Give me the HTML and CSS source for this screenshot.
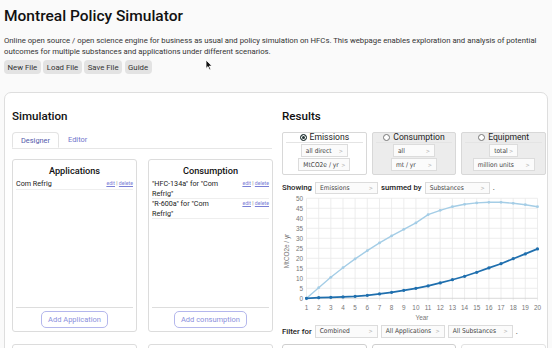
FILE: index.html
```html
<!DOCTYPE html>
<html lang="en">
  <head>
    <meta charset="UTF-8" />
    <meta name="viewport" content="width=device-width, initial-scale=1.0" />
    <title>Montreal Policy Simulator</title>
    <link rel="stylesheet" href="styles.css">
  </head>
  <body>
    <h1>Montreal Policy Simulator</h1>
    <p class="intro">Online open source / open science engine for business as usual and policy simulation on HFCs. This webpage enables exploration and analysis of potential<br>outcomes for multiple substances and applications under different scenarios.</p>

    <div class="file-buttons">
      <button>New File</button>
      <button>Load File</button>
      <button>Save File</button>
      <button>Guide</button>
    </div>

    <svg class="cursor" width="8" height="12" viewBox="0 0 8 12">
      <path d="M1 1 L1 9.5 L3 7.6 L4.6 11 L5.9 10.4 L4.3 7.1 L7 7.1 Z" fill="#111" stroke="#fff" stroke-width="0.8" />
    </svg>

    <main class="workspace">
      <section class="sim">
        <h2>Simulation</h2>
        <div class="tabs">
          <span class="tab active">Designer</span>
          <span class="tab">Editor</span>
        </div>

        <div class="cards">
          <div class="card">
            <h3>Applications</h3>
            <ul class="items">
              <li>
                <span class="item-name">Com Refrig</span>
                <span class="links"><a href="#">edit</a> | <a href="#">delete</a></span>
              </li>
            </ul>
            <div class="card-foot"><button class="add">Add Application</button></div>
          </div>

          <div class="card">
            <h3>Consumption</h3>
            <ul class="items">
              <li>
                <span class="item-name">"HFC-134a" for "Com Refrig"</span>
                <span class="links"><a href="#">edit</a> | <a href="#">delete</a></span>
              </li>
              <li>
                <span class="item-name">"R-600a" for "Com Refrig"</span>
                <span class="links"><a href="#">edit</a> | <a href="#">delete</a></span>
              </li>
            </ul>
            <div class="card-foot"><button class="add">Add consumption</button></div>
          </div>

          <div class="card"><h3>Policies</h3></div>
          <div class="card"><h3>Simulations</h3></div>
        </div>
      </section>

      <section class="results">
        <h2>Results</h2>

        <div class="modes">
          <div class="mode selected">
            <div class="mode-head"><span class="radio on"></span>Emissions</div>
            <span class="pick w47">all direct<span class="caret">&gt;</span></span>
            <span class="pick w52">MtCO2e / yr<span class="caret">&gt;</span></span>
          </div>
          <div class="mode">
            <div class="mode-head"><span class="radio"></span>Consumption</div>
            <span class="pick w42">all<span class="caret">&gt;</span></span>
            <span class="pick w46">mt / yr<span class="caret">&gt;</span></span>
          </div>
          <div class="mode">
            <div class="mode-head"><span class="radio"></span>Equipment</div>
            <span class="pick w29">total<span class="caret">&gt;</span></span>
            <span class="pick w62">million units<span class="caret">&gt;</span></span>
          </div>
        </div>

        <div class="line-row">
          <span class="lbl">Showing</span>
          <span class="pick w63">Emissions<span class="caret">&gt;</span></span>
          <span class="lbl">summed by</span>
          <span class="pick w65">Substances<span class="caret">&gt;</span></span>
          <span>.</span>
        </div>

        <svg class="chart" width="264" height="130" viewBox="0 0 264 130">
          <defs>
            <marker id="dotLight" markerWidth="4" markerHeight="4" refX="2" refY="2" markerUnits="userSpaceOnUse">
              <circle cx="2" cy="2" r="1.4" fill="#a4cde6" />
            </marker>
            <marker id="dotDark" markerWidth="4" markerHeight="4" refX="2" refY="2" markerUnits="userSpaceOnUse">
              <circle cx="2" cy="2" r="1.6" fill="#1f6fae" />
            </marker>
          </defs>
          <g class="grid">
            <path d="M24.5 4.3H255.5M24.5 14.3H255.5M24.5 24.3H255.5M24.5 34.3H255.5M24.5 44.3H255.5M24.5 54.3H255.5M24.5 64.3H255.5M24.5 74.3H255.5M24.5 84.3H255.5M24.5 94.3H255.5" />
            <path d="M24.5 4.3V106.5M36.7 4.3V106.5M48.8 4.3V106.5M61 4.3V106.5M73.1 4.3V106.5M85.3 4.3V106.5M97.5 4.3V106.5M109.6 4.3V106.5M121.8 4.3V106.5M133.9 4.3V106.5M146.1 4.3V106.5M158.2 4.3V106.5M170.4 4.3V106.5M182.6 4.3V106.5M194.7 4.3V106.5M206.9 4.3V106.5M219 4.3V106.5M231.2 4.3V106.5M243.3 4.3V106.5M255.5 4.3V106.5" />
          </g>
          <path class="axis" d="M24.5 104.3H255.5" />
          <g class="ylabels">
            <text x="21" y="106.6">0</text>
            <text x="21" y="96.6">5</text>
            <text x="21" y="86.6">10</text>
            <text x="21" y="76.6">15</text>
            <text x="21" y="66.6">20</text>
            <text x="21" y="56.6">25</text>
            <text x="21" y="46.6">30</text>
            <text x="21" y="36.6">35</text>
            <text x="21" y="26.6">40</text>
            <text x="21" y="16.6">45</text>
            <text x="21" y="6.6">50</text>
          </g>
          <g class="xlabels">
            <text x="24.5" y="115.5">1</text>
            <text x="36.7" y="115.5">2</text>
            <text x="48.8" y="115.5">3</text>
            <text x="61" y="115.5">4</text>
            <text x="73.1" y="115.5">5</text>
            <text x="85.3" y="115.5">6</text>
            <text x="97.5" y="115.5">7</text>
            <text x="109.6" y="115.5">8</text>
            <text x="121.8" y="115.5">9</text>
            <text x="133.9" y="115.5">10</text>
            <text x="146.1" y="115.5">11</text>
            <text x="158.2" y="115.5">12</text>
            <text x="170.4" y="115.5">13</text>
            <text x="182.6" y="115.5">14</text>
            <text x="194.7" y="115.5">15</text>
            <text x="206.9" y="115.5">16</text>
            <text x="219" y="115.5">17</text>
            <text x="231.2" y="115.5">18</text>
            <text x="243.3" y="115.5">19</text>
            <text x="255.5" y="115.5">20</text>
          </g>
          <text class="axis-title" x="140" y="125.5">Year</text>
          <text class="axis-title" transform="translate(7 57) rotate(-90)">MtCO2e / yr</text>

          <polyline class="series light" points="24.5,104.3 36.7,93.7 48.8,83.3 61,73.7 73.1,64.9 85.3,56.7 97.5,48.9 109.6,41.9 121.8,35.3 133.9,28.9 146.1,20.7 158.2,16.3 170.4,12.7 182.6,10.3 194.7,8.9 206.9,8.3 219,8.3 231.2,9.3 243.3,10.7 255.5,12.7" />
          <polyline class="series dark" points="24.5,104.3 36.7,103.7 48.8,103.3 61,102.9 73.1,102.3 85.3,101.3 97.5,99.9 109.6,98.3 121.8,96.3 133.9,94.3 146.1,91.9 158.2,88.9 170.4,85.7 182.6,82.3 194.7,78.3 206.9,73.9 219,69.7 231.2,64.7 243.3,59.9 255.5,54.9" />
        </svg>

        <div class="line-row filter">
          <span class="lbl">Filter for</span>
          <span class="pick w63">Combined<span class="caret">&gt;</span></span>
          <span class="pick w64">All Applications<span class="caret">&gt;</span></span>
          <span class="pick w65">All Substances<span class="caret">&gt;</span></span>
          <span>.</span>
        </div>

        <div class="views">
          <button class="view">&#9673; Simulations</button>
          <button class="view">&#9675; Applications</button>
          <button class="view light">&#9679; Substances</button>
        </div>
      </section>
    </main>
  </body>
</html>
```

FILE: styles.css
```css
body {
  margin: 0;
  padding: 0 4px;
  background-color: #fafafa;
  font-family: Roboto, "Noto Sans", sans-serif;
  color: #222;
}
h1 {
  font-size: 15.5px;
  font-weight: 500;
  line-height: 18px;
  margin: 7px 0 0;
  color: #111;
}
.intro {
  font-size: 7.75px;
  line-height: 11px;
  margin: 10px 0 0;
  color: #333;
  white-space: nowrap;
}
.file-buttons {
  display: flex;
  gap: 2.5px;
  margin-top: 3px;
}
.file-buttons button {
  height: 14px;
  padding: 0 3.5px;
  border: none;
  border-radius: 4px;
  background: #e3e3e3;
  color: #333;
  font-family: inherit;
  font-size: 7.8px;
}
.cursor {
  position: absolute;
  left: 205px;
  top: 59px;
}

.workspace {
  display: grid;
  grid-template-columns: 260px 1fr;
  gap: 10px;
  margin-top: 18px;
  padding: 16px 6px 0 7px;
  height: 300px;
  background: white;
  border: 1px solid #dedede;
  border-radius: 7px;
}
h2 {
  font-size: 11.6px;
  font-weight: 500;
  line-height: 14px;
  margin: 0;
  color: #111;
}

/* simulation side */
.tabs {
  display: flex;
  margin-top: 9px;
  height: 16px;
  border-bottom: 1px solid #e6e6e6;
}
.tab {
  padding: 0 9px;
  font-size: 7.4px;
  line-height: 16px;
  color: #7075cc;
}
.tab.active {
  padding: 0 8px;
  border: 1px solid #e3e3e3;
  border-bottom-color: white;
  border-radius: 4px 4px 0 0;
  background: white;
  color: #555aab;
}
.cards {
  display: grid;
  grid-template-columns: 125px 125px;
  gap: 12px 11px;
  margin-top: 10px;
}
.card {
  display: flex;
  flex-direction: column;
  height: 171px;
  padding: 0 3px;
  border: 1px solid #dcdcdc;
  border-radius: 3px;
}
.card h3 {
  margin: 4.5px 0 3.5px;
  font-size: 9.2px;
  font-weight: 500;
  line-height: 11px;
  text-align: center;
  color: #111;
}
.items {
  flex: 1;
  list-style: none;
  margin: 0;
  padding: 0;
}
.items li {
  display: flex;
  align-items: flex-start;
  font-size: 7.2px;
  line-height: 9.6px;
  border-bottom: 1px solid #eee;
}
.item-name {
  flex: 1;
  padding-right: 14px;
}
.links {
  font-size: 5.2px;
  line-height: 9.6px;
  color: #777;
}
.links a {
  color: #7b80d6;
}
.card-foot {
  display: flex;
  justify-content: center;
  padding: 3px 0;
  border-top: 1px solid #ddd;
}
.add {
  height: 17px;
  padding: 0 6px;
  border: 1px solid #b4b7ec;
  border-radius: 5px;
  background: white;
  color: #8b8fdc;
  font-family: inherit;
  font-size: 7.5px;
}

/* results side */
.modes {
  display: grid;
  grid-template-columns: repeat(3, 1fr);
  gap: 5px;
  margin-top: 8.7px;
}
.mode {
  display: flex;
  flex-direction: column;
  align-items: center;
  gap: 1.3px;
  padding: 0 3px 3.5px;
  background: #ececec;
  border: 1px solid #d8d8d8;
  border-radius: 2px;
}
.mode.selected {
  background: white;
}
.mode-head {
  align-self: stretch;
  display: flex;
  justify-content: center;
  align-items: center;
  height: 9.5px;
  font-size: 8.6px;
  color: #222;
  border-bottom: 1px solid #e4e4e4;
}
.radio {
  display: inline-block;
  width: 5px;
  height: 5px;
  margin-right: 3px;
  border: 1px solid #777;
  border-radius: 50%;
  background: white;
}
.radio.on {
  border: 1.5px solid #233;
  background: #233;
  box-shadow: inset 0 0 0 1px white;
}
.pick {
  display: inline-flex;
  justify-content: space-between;
  align-items: center;
  box-sizing: border-box;
  height: 12.6px;
  padding: 0 4px;
  background: #fbfbfb;
  border: 1px solid #dcdcdc;
  font-family: "DejaVu Sans Condensed", "DejaVu Sans", sans-serif;
  font-stretch: condensed;
  font-size: 6.6px;
  color: #444;
}
.caret {
  font-size: 5.5px;
  color: #b5b5b5;
}
.w29 { width: 29px; }
.w42 { width: 42px; }
.w46 { width: 46px; }
.w47 { width: 47px; }
.w52 { width: 52px; }
.w62 { width: 62px; }
.w63 { width: 63px; }
.w64 { width: 64px; }
.w65 { width: 65px; }

.line-row {
  display: flex;
  align-items: center;
  gap: 3px;
  height: 13px;
  margin-top: 6px;
  font-size: 7.8px;
}
.line-row .lbl {
  font-weight: 500;
  color: #222;
}
.line-row.filter {
  margin-top: 0.5px;
}
.chart {
  display: block;
}
.grid path {
  stroke: #e8e8e8;
  stroke-width: 0.8;
  fill: none;
}
.axis {
  stroke: #cfcfcf;
  stroke-width: 0.8;
}
.ylabels text,
.xlabels text,
.axis-title {
  font-family: "Liberation Sans", Arial, sans-serif;
  font-size: 6.4px;
  fill: #777;
}
.ylabels text {
  text-anchor: end;
}
.xlabels text,
.axis-title {
  text-anchor: middle;
}
.series {
  fill: none;
}
.series.light {
  stroke: #a4cde6;
  stroke-width: 1.4;
  marker-start: url(#dotLight);
  marker-mid: url(#dotLight);
  marker-end: url(#dotLight);
}
.series.dark {
  stroke: #1f6fae;
  stroke-width: 1.7;
  marker-start: url(#dotDark);
  marker-mid: url(#dotDark);
  marker-end: url(#dotDark);
}
.views {
  display: grid;
  grid-template-columns: repeat(3, 1fr);
  gap: 5px;
  margin-top: 6px;
}
.view {
  height: 20px;
  border: 1px solid #cfcfcf;
  border-radius: 3px;
  background: white;
  font-family: inherit;
  font-size: 8px;
  color: #444;
}
.view.light {
  border-color: #e2e2e2;
}
```
